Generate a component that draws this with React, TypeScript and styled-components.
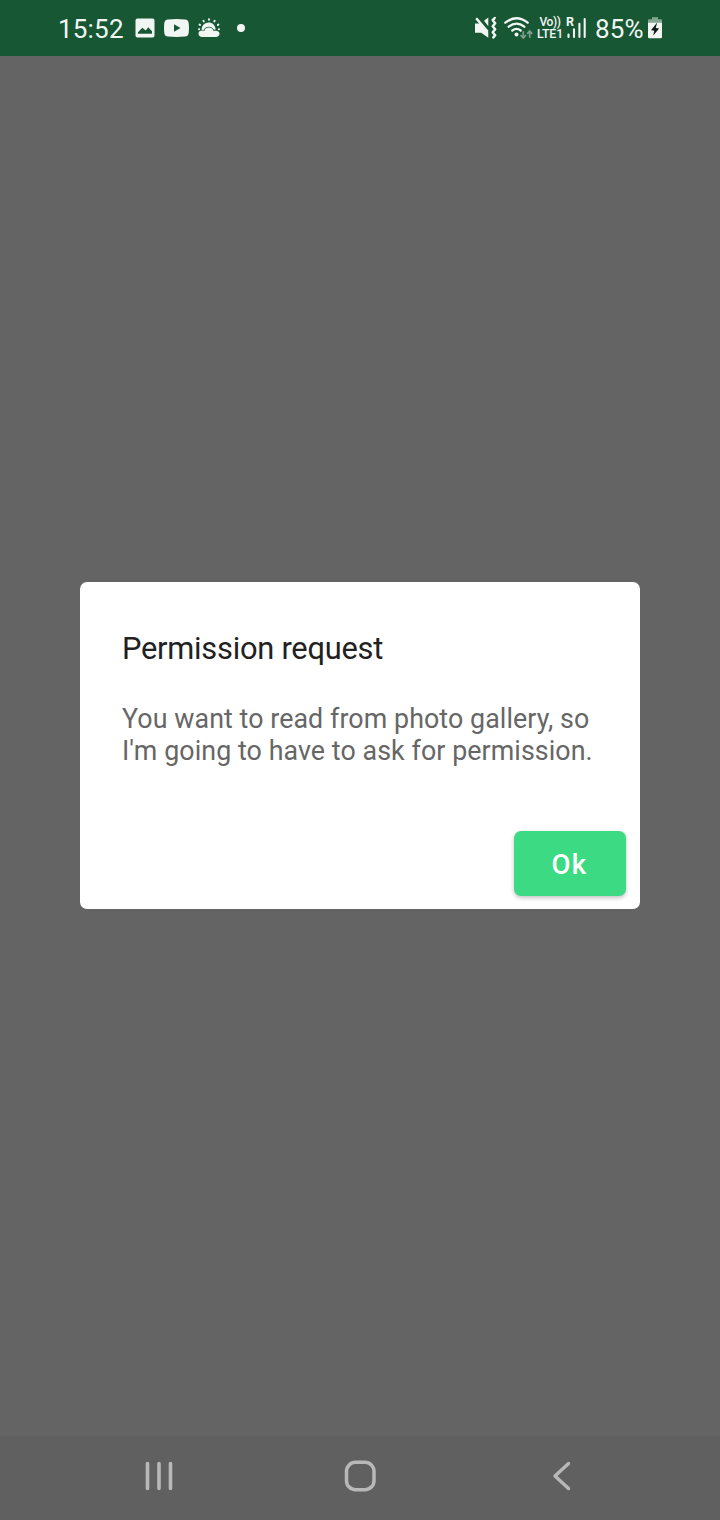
import React from "react";
import styled, { createGlobalStyle } from "styled-components";

const GlobalStyle = createGlobalStyle`
  body { margin: 0; background: #646464; }
  * { box-sizing: border-box; }
`;

const Screen = styled.div`
  width: 720px;
  height: 1520px;
  display: flex;
  flex-direction: column;
  background: #646464;
  font-family: Roboto, "Liberation Sans", sans-serif;
`;

const StatusBar = styled.header`
  height: 56px;
  flex: none;
  display: flex;
  justify-content: space-between;
  padding: 0 58px;
  background: #185734;
  color: #f1f6f3;
`;

const StatusGroup = styled.div`
  display: flex;
  align-items: center;
  height: 56px;
`;

const StatusText = styled.span<{ $width: number }>`
  width: ${(p) => p.$width}px;
  font-size: 26px;
  line-height: 30px;
  padding-top: 2px;
  letter-spacing: 0.2px;
  white-space: nowrap;
`;

const Icon = styled.svg<{ $gap?: number }>`
  display: block;
  flex: none;
  margin-left: ${(p) => p.$gap ?? 0}px;
`;

const Network = styled.div`
  display: flex;
  flex-direction: column;
  align-items: center;
  width: 28px;
  margin-left: 3px;
  font-weight: 500;
`;

const NetworkLine = styled.span<{ $size: number; $spacing: number }>`
  font-size: ${(p) => p.$size}px;
  letter-spacing: ${(p) => p.$spacing}px;
  line-height: 12px;
  white-space: nowrap;
`;

const Signal = styled.div`
  display: flex;
  position: relative;
  margin-left: 3px;
  margin-right: 9px;
`;

const Roaming = styled.span`
  position: absolute;
  left: -1px;
  top: 0;
  font-size: 12.5px;
  line-height: 10px;
  font-weight: 700;
`;

const Content = styled.main`
  flex: 1;
  display: flex;
  flex-direction: column;
  align-items: center;
  padding-top: 526px;
`;

const Dialog = styled.section`
  width: 560px;
  height: 327px;
  display: flex;
  flex-direction: column;
  padding: 46px 14px 13px 42px;
  background: #fff;
  border-radius: 7px;
`;

const Title = styled.h1`
  margin: 0;
  font-size: 30.8px;
  line-height: 41px;
  font-weight: 400;
  color: #212121;
  letter-spacing: -0.23px;
`;

const Message = styled.p`
  margin: 34px 0 0;
  font-size: 26.8px;
  line-height: 32px;
  color: #666;
  letter-spacing: 0.08px;
  white-space: nowrap;
`;

const Actions = styled.div`
  display: flex;
  justify-content: flex-end;
  margin-top: auto;
`;

const OkButton = styled.button`
  width: 112px;
  height: 65px;
  padding: 2px 1px 0 0;
  border: 0;
  border-radius: 7px;
  background: #3dda84;
  color: #fff;
  font: 500 27.5px/32px Roboto, "Liberation Sans", sans-serif;
  letter-spacing: 1.3px;
  box-shadow: 0 2px 4px rgba(0, 0, 0, 0.24);
`;

const NavBar = styled.nav`
  height: 84px;
  flex: none;
  display: flex;
  justify-content: space-between;
  align-items: flex-start;
  padding: 20px 138px 0 139px;
  background: #606060;
`;

const PictureIcon = () => (
  <Icon width="20" height="20" viewBox="0 0 20 20" $gap={11}>
    <path fill="currentColor" fillRule="evenodd" d="M2.5.5h15a2 2 0 0 1 2 2v15a2 2 0 0 1-2 2h-15a2 2 0 0 1-2-2v-15a2 2 0 0 1 2-2ZM3 15.800h14v-2.500L13.200 9.300l-2.400 3.200-3.500-2.800L3 14.300Z" />
  </Icon>
);

const VideoIcon = () => (
  <Icon width="25" height="18" viewBox="0 0 25 18" $gap={9}>
    <path fill="currentColor" fillRule="evenodd" d="M4 .4Q12.5-.4 21 .4 24.4.7 24.7 4q.5 5 0 10-.3 3.3-3.7 3.6-8.5.8-17 0Q.6 17.300.3 14q-.5-5 0-10Q.6.7 4 .4ZM10 5.300v7.400l6.500-3.700Z" />
  </Icon>
);

const WeatherIcon = () => (
  <Icon width="22" height="20" viewBox="0 0 22 20" $gap={9} fill="none" stroke="currentColor" strokeLinecap="round">
    <path strokeWidth="1.9" d="M11 1.200v.6M5.400 2.800l.4.6M16.700 2.800l-.4.6M1.500 6.600l.5.300M20.400 6.600l-.5.300M1 11.300h.2M20.800 11.300h.2" />
    <path fill="currentColor" stroke="none" d="M3.600 11.700C3.800 7.600 6.700 4.600 10.700 4.600c3.700 0 6.400 2.500 7 6.900l-1.900.3C14.700 9.700 13 8.700 10.800 8.700c-2.300 0-4 1.100-5 3.200Z" />
    <path fill="currentColor" stroke="none" d="M4.200 12.600c.9 0 1.500.1 2.100.3C7 10.700 8.600 9.600 10.800 9.600c2.200 0 3.900 1.200 4.500 3.100h2.500c2.200 0 3.700 1.200 3.700 3.100s-1.500 3.200-3.700 3.200H4.200C2 19 .5 17.800.5 15.800s1.500-3.200 3.700-3.200Z" />
  </Icon>
);

const DotIcon = () => (
  <Icon width="8" height="8" viewBox="0 0 8 8" $gap={17}>
    <circle cx="4" cy="4" r="4" fill="currentColor" />
  </Icon>
);

const VibrateMuteIcon = () => (
  <Icon width="24" height="24" viewBox="0 0 24 24">
    <path fill="currentColor" d="M1 7.600h5.700l7.600 9v5.200L7.200 16.700H1ZM10 4.800l4.300-3.400v8.800Z" />
    <path fill="none" stroke="currentColor" strokeWidth="2.500" d="m2.200 2.300 11.500 13.600" />
    <path fill="none" stroke="currentColor" strokeWidth="2.500" strokeLinecap="round" strokeLinejoin="round" d="m20.700 2-2 2.200 2.500 3-2.500 3 2.500 3-2.500 3 2.500 3-1.900 2.200" />
  </Icon>
);

const WifiIcon = () => (
  <Icon width="30" height="24" viewBox="0 0 30 24" $gap={5}>
    <path fill="none" stroke="currentColor" strokeWidth="2.300" strokeLinecap="round" d="M2.300 6.700q11.200-9 22.400 0M5.700 10.700q7.800-6.200 15.600 0M9.300 14.500q4.200-3.300 8.400 0" />
    <circle cx="13.500" cy="18.400" r="2" fill="currentColor" />
    <path fill="none" stroke="#7b9f8a" strokeWidth="1.700" d="M20.300 15.300v6.500m-2.700-2.700 2.700 2.900 2.700-2.900M26.700 21.700v-6.500m-2.500 2.600 2.500-2.700 2.500 2.700" />
  </Icon>
);

const SignalIcon = () => (
  <Icon width="19" height="22" viewBox="0 0 19 22">
    <path fill="none" stroke="currentColor" strokeWidth="2.100" strokeLinecap="round" d="M1.500 17.500v2.500M7 12.300v7.700M12.400 6.800v13.200M17.700 2v18" />
  </Icon>
);

const BatteryIcon = () => (
  <Icon width="14" height="22" viewBox="0 0 14 22">
    <path fill="#83a691" d="M4 .3h6v2h3q1 0 1 1V6H0V3.300q0-1 1-1h3Z" />
    <path fill="currentColor" d="M0 5.700h14V20q0 1.300-1.300 1.300H1.300Q0 21.300 0 20Z" />
    <path fill="#111915" d="M9.200 5.600 3 13.200l3.300.6-1.200 5 6-7.400-3.400-.5Z" />
  </Icon>
);

export default function App() {
  return (
    <>
      <GlobalStyle />
      <Screen>
        <StatusBar>
          <StatusGroup>
            <StatusText $width={66}>15:52</StatusText>
            <PictureIcon />
            <VideoIcon />
            <WeatherIcon />
            <DotIcon />
          </StatusGroup>
          <StatusGroup>
            <VibrateMuteIcon />
            <WifiIcon />
            <Network>
              <NetworkLine $size={12} $spacing={-0.4}>Vo))</NetworkLine>
              <NetworkLine $size={12.3} $spacing={-0.1}>LTE1</NetworkLine>
            </Network>
            <Signal>
              <Roaming>R</Roaming>
              <SignalIcon />
            </Signal>
            <StatusText $width={53}>85%</StatusText>
            <BatteryIcon />
          </StatusGroup>
        </StatusBar>
        <Content>
          <Dialog role="dialog" aria-labelledby="dialog-title">
            <Title id="dialog-title">Permission request</Title>
            <Message>
              You want to read from photo gallery, so
              <br />
              I'm going to have to ask for permission.
            </Message>
            <Actions>
              <OkButton>Ok</OkButton>
            </Actions>
          </Dialog>
        </Content>
        <NavBar>
          <Icon width="40" height="40" viewBox="0 0 40 40">
            <path fill="none" stroke="#b8b8b8" strokeWidth="3.600" strokeLinecap="round" d="M8.500 7.500v25M20 7.500v25M31.500 7.500v25" />
          </Icon>
          <Icon width="40" height="40" viewBox="0 0 40 40">
            <rect x="5.500" y="6.300" width="27.500" height="27.400" rx="9" fill="none" stroke="#b8b8b8" strokeWidth="3.500" />
          </Icon>
          <Icon width="40" height="40" viewBox="0 0 40 40">
            <path fill="none" stroke="#b8b8b8" strokeWidth="3.400" strokeLinecap="round" strokeLinejoin="round" d="M26.500 7.500 13 20l13.500 12.500" />
          </Icon>
        </NavBar>
      </Screen>
    </>
  );
}
